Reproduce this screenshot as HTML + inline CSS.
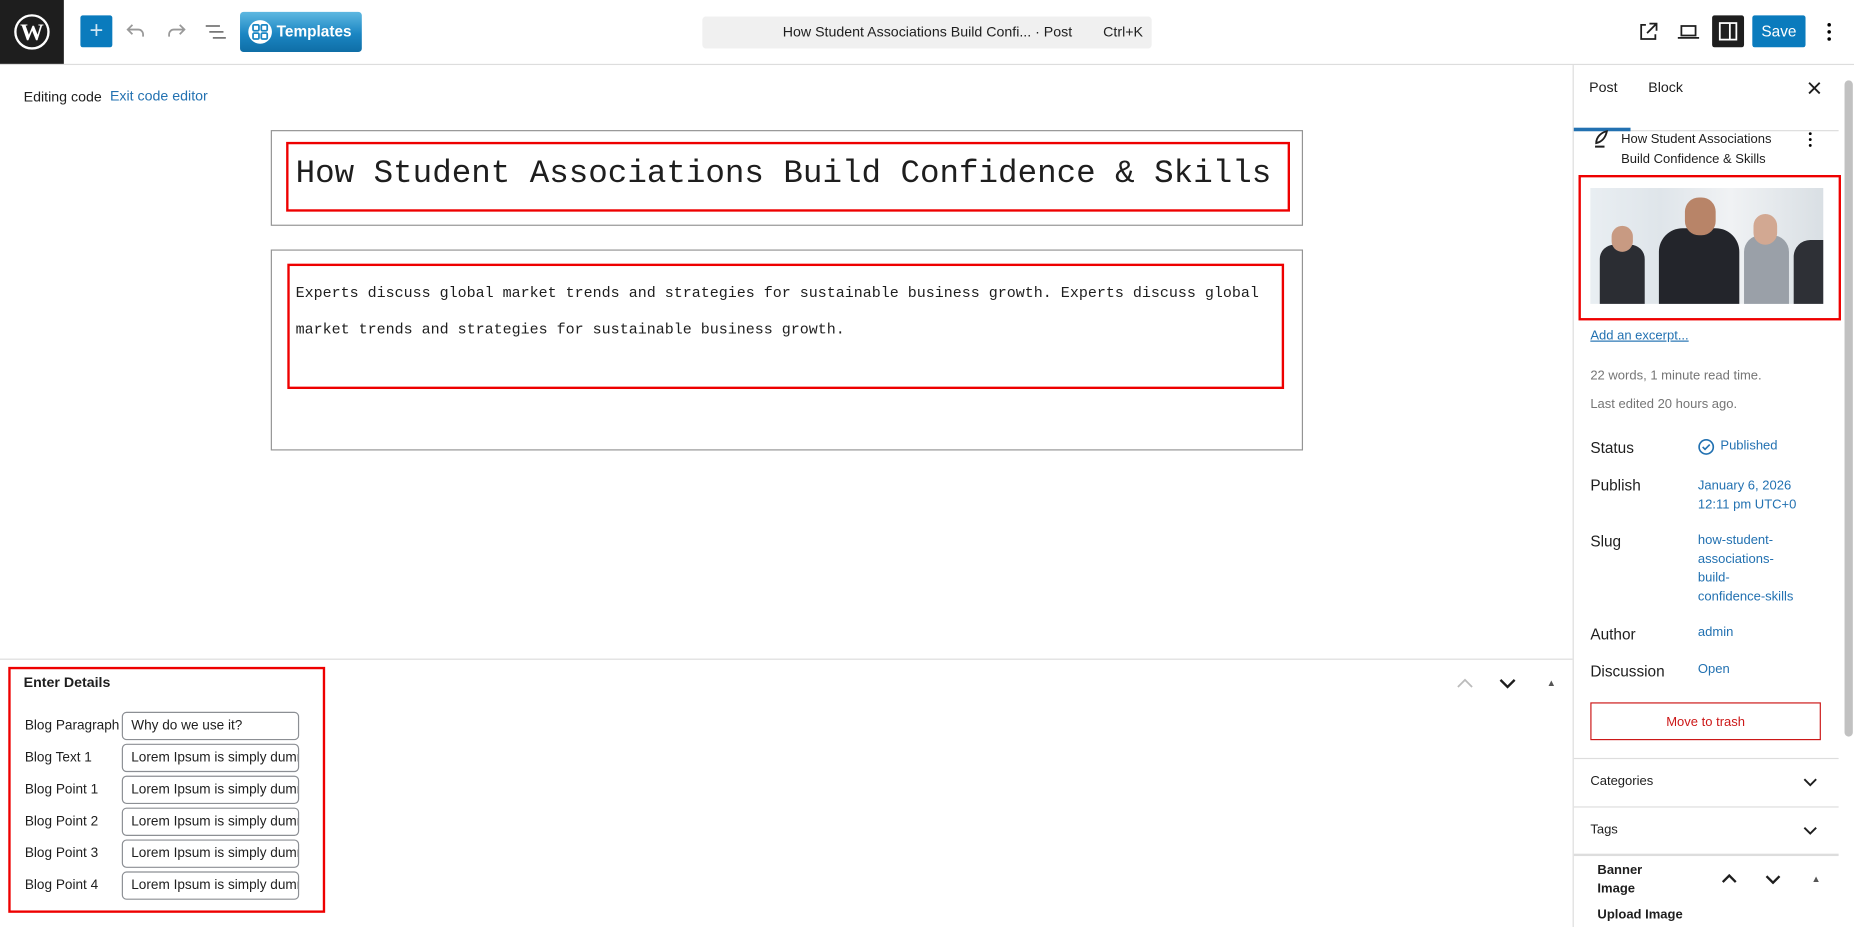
<!DOCTYPE html>
<html><head><meta charset="utf-8"><style>
html,body{margin:0;padding:0;width:1854px;height:927px;overflow:hidden;background:#fff}
#w{position:absolute;left:0;top:0;width:1568px;height:784px;transform:scale(1.18240);transform-origin:0 0;font-family:"Liberation Sans",sans-serif;color:#1e1e1e;font-size:13px}
.a{position:absolute}
.mono{font-family:"Liberation Mono",monospace}
.blue{color:#2271b1}
.lbl{font-size:11.5px}
.inp{position:absolute;left:103px;height:24px;border:1px solid #8c8f94;border-radius:4px;font-size:11.5px;line-height:23px;padding-left:7px;box-sizing:border-box;width:150px;white-space:nowrap;overflow:hidden}
</style></head><body><div id="w">
<!-- top bar -->
<div class="a" style="left:0;top:0;width:1568px;height:54px;border-bottom:1px solid #ddd"></div>
<div class="a" style="left:0;top:0;width:54px;height:54px;background:#1e1e1e"></div>
<svg class="a" style="left:11px;top:11px" width="32" height="32" viewBox="0 0 32 32"><circle cx="16" cy="16" r="14" fill="none" stroke="#fff" stroke-width="2"/><text x="16" y="23" font-size="20" font-family="Liberation Serif" font-weight="bold" fill="#fff" text-anchor="middle">W</text></svg>
<div class="a" style="left:68px;top:13px;width:27px;height:27px;background:#0a7bbd;border-radius:2px;color:#cfe6f3;font-size:20px;text-align:center;line-height:26px">+</div>
<svg class="a" style="left:107px;top:19px" width="16" height="14"><path d="M5 2L1 6l4 4M1 6h9a4 4 0 0 1 4 4v2" fill="none" stroke="#999" stroke-width="1.5"/></svg>
<svg class="a" style="left:141px;top:19px" width="16" height="14"><path d="M11 2l4 4-4 4M15 6H6a4 4 0 0 0-4 4v2" fill="none" stroke="#999" stroke-width="1.5"/></svg>
<svg class="a" style="left:173px;top:20px" width="20" height="14"><path d="M1 2h12M4 7h12M7 12h11" stroke="#777" stroke-width="1.5"/></svg>
<div class="a" style="left:203px;top:10px;width:103px;height:34px;border-radius:3px;background:linear-gradient(#5eb8e1,#1b86c3 55%,#0f6ea6);"></div>
<div class="a" style="left:210px;top:17px;width:20px;height:20px;border-radius:50%;background:#fff"></div>
<svg class="a" style="left:213px;top:20px" width="14" height="14"><g fill="none" stroke="#1b86c3" stroke-width="1.5"><rect x="1" y="1" width="5" height="5" rx="1"/><rect x="8" y="1" width="5" height="5" rx="1"/><rect x="1" y="8" width="5" height="5" rx="1"/><rect x="8" y="8" width="5" height="5" rx="1"/></g></svg>
<div class="a" style="left:234px;top:19px;color:#fff;font-weight:bold;font-size:13px">Templates</div>
<div class="a" style="left:594px;top:14px;width:380px;height:27px;background:#f0f0f0;border-radius:3px"></div>
<div class="a" style="left:662px;top:20px;font-size:12px">How Student Associations Build Confi... · Post</div>
<div class="a" style="left:933px;top:20px;font-size:12px">Ctrl+K</div>
<svg class="a" style="left:1385px;top:18px" width="18" height="18"><path d="M7 3H3v12h12v-4M10 2h6v6M16 2l-8 8" fill="none" stroke="#1e1e1e" stroke-width="1.5"/></svg>
<svg class="a" style="left:1418px;top:19px" width="20" height="16"><path d="M4 3h12v8H4zM1 13h18" fill="none" stroke="#1e1e1e" stroke-width="1.5"/></svg>
<div class="a" style="left:1448px;top:13px;width:27px;height:27px;background:#1e1e1e;border-radius:2px"></div>
<svg class="a" style="left:1453px;top:18px" width="17" height="17"><rect x="1.5" y="1.5" width="14" height="14" fill="none" stroke="#fff" stroke-width="1.5"/><path d="M10 2v13" stroke="#fff" stroke-width="1.5"/></svg>
<div class="a" style="left:1482px;top:13px;width:45px;height:27px;background:#0a7bbd;border-radius:2px;color:#fff;text-align:center;line-height:27px;font-size:13px">Save</div>
<svg class="a" style="left:1544px;top:18px" width="6" height="18"><circle cx="3" cy="3" r="1.5"/><circle cx="3" cy="9" r="1.5"/><circle cx="3" cy="15" r="1.5"/></svg>
<!-- editor -->
<div class="a" style="left:20px;top:75px;font-size:12px">Editing code</div>
<div class="a blue" style="left:93px;top:74px;font-size:12px">Exit code editor</div>
<div class="a" style="left:229px;top:110px;width:871px;height:79px;border:1px solid #949494"></div>
<div class="a" style="left:242px;top:120px;width:845px;height:55px;border:2px solid #e00"></div>
<div class="a mono" style="left:250px;top:132px;font-size:27.5px;color:#1e1e1e">How Student Associations Build Confidence &amp; Skills</div>
<div class="a" style="left:229px;top:211px;width:871px;height:168px;border:1px solid #949494"></div>
<div class="a" style="left:243px;top:223px;width:839px;height:102px;border:2px solid #e00"></div>
<div class="a mono" style="left:250px;top:232px;font-size:12.7px;line-height:31px;width:830px">Experts discuss global market trends and strategies for sustainable business growth. Experts discuss global market trends and strategies for sustainable business growth.</div>
<!-- meta box -->
<div class="a" style="left:0;top:557px;width:1330px;height:1px;background:#ddd"></div>
<div class="a" style="left:7px;top:564px;width:264px;height:204px;border:2px solid #e00"></div>
<div class="a" style="left:20px;top:570px;font-size:12px;font-weight:bold">Enter Details</div>
<svg class="a" style="left:1232px;top:573px" width="14" height="10"><path d="M1 8l6-6 6 6" fill="none" stroke="#bbb" stroke-width="1.5"/></svg>
<svg class="a" style="left:1268px;top:573px" width="14" height="10"><path d="M1 2l6 6 6-6" fill="none" stroke="#1e1e1e" stroke-width="2"/></svg>
<div class="a" style="left:1308px;top:573px;font-size:8px;color:#555">▲</div>
<div class="a lbl" style="left:21px;top:608px">Blog Paragraph</div><div class="inp" style="top:602px">Why do we use it?</div>
<div class="a lbl" style="left:21px;top:635px">Blog Text 1</div><div class="inp" style="top:629px">Lorem Ipsum is simply dummy</div>
<div class="a lbl" style="left:21px;top:662px">Blog Point 1</div><div class="inp" style="top:656px">Lorem Ipsum is simply dummy</div>
<div class="a lbl" style="left:21px;top:689px">Blog Point 2</div><div class="inp" style="top:683px">Lorem Ipsum is simply dummy</div>
<div class="a lbl" style="left:21px;top:716px">Blog Point 3</div><div class="inp" style="top:710px">Lorem Ipsum is simply dummy</div>
<div class="a lbl" style="left:21px;top:743px">Blog Point 4</div><div class="inp" style="top:737px">Lorem Ipsum is simply dummy</div>
<!-- sidebar -->
<div class="a" style="left:1330px;top:55px;width:1px;height:729px;background:#ddd"></div>
<div class="a" style="left:1331px;top:110px;width:224px;height:1px;background:#ddd"></div>
<div class="a" style="left:1331px;top:108px;width:48px;height:3px;background:#2271b1"></div>
<div class="a" style="left:1344px;top:67px;font-size:12px">Post</div>
<div class="a" style="left:1394px;top:67px;font-size:12px">Block</div>
<svg class="a" style="left:1529px;top:69px" width="11" height="11"><path d="M1 1l9 9M10 1l-9 9" stroke="#1e1e1e" stroke-width="1.6"/></svg>
<div class="a" style="left:1560px;top:68px;width:7px;height:555px;background:#c1c1c1;border-radius:4px"></div>
<svg class="a" style="left:1347px;top:110px" width="14" height="16"><path d="M3 11C3 6 7 2 12 1 11 6 8 10 3 11zM2 14h8" fill="none" stroke="#1e1e1e" stroke-width="1.6"/></svg>
<div class="a" style="left:1371px;top:110px;font-size:11px;line-height:17px">How Student Associations<br>Build Confidence &amp; Skills</div>
<svg class="a" style="left:1528px;top:111px" width="6" height="14"><circle cx="3" cy="2" r="1.2"/><circle cx="3" cy="7" r="1.2"/><circle cx="3" cy="12" r="1.2"/></svg>
<div class="a" style="left:1335px;top:148px;width:218px;height:119px;border:2px solid #e00"></div>
<div class="a" style="left:1345px;top:159px;width:197px;height:98px;background:linear-gradient(90deg,#e9eef2 0,#dfe5ea 30%,#f0f2f4 60%,#d9dfe4 100%);overflow:hidden">
 <div class="a" style="left:8px;top:48px;width:38px;height:55px;background:#2b2d33;border-radius:12px 12px 0 0"></div>
 <div class="a" style="left:18px;top:32px;width:18px;height:22px;background:#c89a82;border-radius:9px"></div>
 <div class="a" style="left:58px;top:34px;width:68px;height:70px;background:#23252b;border-radius:20px 20px 0 0"></div>
 <div class="a" style="left:80px;top:8px;width:26px;height:32px;background:#b88468;border-radius:12px"></div>
 <div class="a" style="left:130px;top:40px;width:38px;height:60px;background:#9aa0a8;border-radius:14px 14px 0 0"></div>
 <div class="a" style="left:138px;top:22px;width:20px;height:26px;background:#d2a892;border-radius:10px"></div>
 <div class="a" style="left:172px;top:44px;width:30px;height:60px;background:#2e3036;border-radius:14px 0 0 0"></div>
</div>
<div class="a blue" style="left:1345px;top:278px;font-size:11px;text-decoration:underline">Add an excerpt...</div>
<div class="a" style="left:1345px;top:312px;font-size:11px;color:#757575">22 words, 1 minute read time.</div>
<div class="a" style="left:1345px;top:336px;font-size:11px;color:#757575">Last edited 20 hours ago.</div>
<div class="a" style="left:1345px;top:371px;font-size:13px">Status</div>
<svg class="a" style="left:1436px;top:371px" width="14" height="14"><circle cx="7" cy="7" r="6" fill="none" stroke="#2271b1" stroke-width="1.4"/><path d="M4 7l2 2 4-4" fill="none" stroke="#2271b1" stroke-width="1.4"/></svg>
<div class="a blue" style="left:1455px;top:371px;font-size:11px">Published</div>
<div class="a" style="left:1345px;top:403px;font-size:13px">Publish</div>
<div class="a blue" style="left:1436px;top:403px;font-size:11px;line-height:16px">January 6, 2026<br>12:11 pm UTC+0</div>
<div class="a" style="left:1345px;top:450px;font-size:13px">Slug</div>
<div class="a blue" style="left:1436px;top:449px;font-size:11px;line-height:16px">how-student-<br>associations-<br>build-<br>confidence-skills</div>
<div class="a" style="left:1345px;top:529px;font-size:13px">Author</div>
<div class="a blue" style="left:1436px;top:529px;font-size:11px">admin</div>
<div class="a" style="left:1345px;top:560px;font-size:13px">Discussion</div>
<div class="a blue" style="left:1436px;top:560px;font-size:11px">Open</div>
<div class="a" style="left:1345px;top:594px;width:195px;height:32px;border:1px solid #cc1818;color:#cc1818;font-size:11px;text-align:center;line-height:32px;box-sizing:border-box">Move to trash</div>
<div class="a" style="left:1331px;top:641px;width:224px;height:1px;background:#ddd"></div>
<div class="a" style="left:1345px;top:655px;font-size:11px">Categories</div>
<svg class="a" style="left:1525px;top:658px" width="12" height="8"><path d="M1 1l5 5 5-5" fill="none" stroke="#1e1e1e" stroke-width="1.6"/></svg>
<div class="a" style="left:1331px;top:682px;width:224px;height:1px;background:#ddd"></div>
<div class="a" style="left:1345px;top:696px;font-size:11px">Tags</div>
<svg class="a" style="left:1525px;top:699px" width="12" height="8"><path d="M1 1l5 5 5-5" fill="none" stroke="#1e1e1e" stroke-width="1.6"/></svg>
<div class="a" style="left:1331px;top:722px;width:224px;height:2px;background:#ddd"></div>
<div class="a" style="left:1351px;top:728px;font-size:11px;font-weight:bold;line-height:16px">Banner<br>Image</div>
<svg class="a" style="left:1456px;top:739px" width="13" height="9"><path d="M1 7l5.5-5.5L12 7" fill="none" stroke="#1e1e1e" stroke-width="2"/></svg>
<svg class="a" style="left:1493px;top:739px" width="13" height="9"><path d="M1 2l5.5 5.5L12 2" fill="none" stroke="#1e1e1e" stroke-width="2"/></svg>
<div class="a" style="left:1532px;top:739px;font-size:8px;color:#555">▲</div>
<div class="a" style="left:1351px;top:768px;font-size:11px;font-weight:bold">Upload Image</div>
</div></body></html>
